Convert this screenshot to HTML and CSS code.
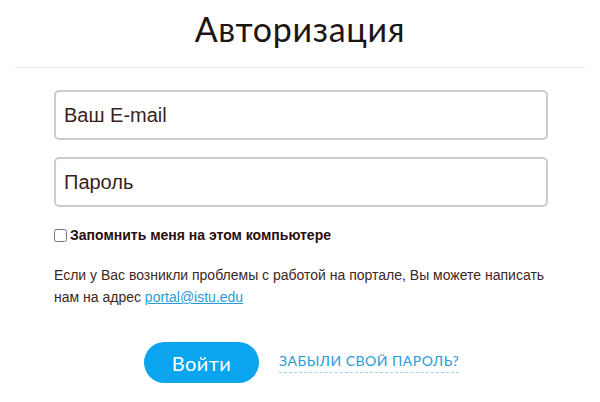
FILE: index.html
```html
<!doctype html>
<html lang="ru">
    <head>
        <meta charset="UTF-8" />
        <meta name="viewport" content="width=device-width, initial-scale=1.0" />
        <title>Авторизация</title>
        <link rel="stylesheet" href="styles.css">
    </head>
    <body>
        <div class="page-head">
            <h1>Авторизация</h1>
        </div>

        <form class="login-form">
            <input class="field" type="text" placeholder="Ваш E-mail" />
            <input class="field" type="password" placeholder="Пароль" />

            <label class="remember">
                <input type="checkbox" />
                <span>Запомнить меня на этом компьютере</span>
            </label>

            <p class="help">
                Если у Вас возникли проблемы с работой на портале, Вы можете написать
                нам на адрес <a href="#">portal@istu.edu</a>
            </p>

            <div class="actions">
                <button type="button" class="btn-login">Войти</button>
                <a href="#" class="forgot">ЗАБЫЛИ СВОЙ ПАРОЛЬ?</a>
            </div>
        </form>
    </body>
</html>
```

FILE: styles.css
```css
:root {
    --text-color: #3b1f1c;
    --accent-color: #0aa5ee;
    --link-color: #2a9bd6;
    --border-color: #cccccc;
}

body {
    font-family: "Liberation Sans", Arial, sans-serif;
    margin: 0;
    padding: 0;
    background: #fff;
    color: var(--text-color);
}

.page-head {
    margin: 0 14px 0 14px;
    height: 67px;
    border-bottom: 1px solid #ececec;
    display: flex;
    align-items: center;
    justify-content: center;
}

.page-head h1 {
    font-family: Lato, "Noto Sans", sans-serif;
    font-weight: 400;
    font-size: 34px;
    letter-spacing: 0.7px;
    color: #1e1414;
    margin: 0 0 10px 0;
}

.login-form {
    width: 494px;
    margin: 22px 0 0 54px;
}

.field {
    display: block;
    box-sizing: border-box;
    width: 100%;
    height: 50px;
    margin: 0 0 17px 0;
    padding: 0 8px;
    border: 2px solid var(--border-color);
    border-radius: 5px;
    font-family: "Liberation Sans", Arial, sans-serif;
    font-size: 20px;
    color: var(--text-color);
}

.field::placeholder {
    color: var(--text-color);
    opacity: 1;
}

.remember {
    display: flex;
    align-items: center;
    gap: 3px;
    margin-top: 20px;
    font-weight: bold;
    font-size: 14px;
    color: #2a0e0c;
}

.remember input {
    margin: 0;
    width: 13px;
    height: 13px;
}

.help {
    font-size: 14px;
    line-height: 22px;
    margin: 21px 0 0 0;
    color: #3d2724;
}

.help a {
    color: var(--link-color);
}

.actions {
    display: flex;
    align-items: center;
    gap: 20px;
    margin: 34px 0 0 90px;
}

.btn-login {
    width: 115px;
    height: 41px;
    border: none;
    border-radius: 21px;
    background: var(--accent-color);
    color: #fff;
    font-family: Lato, "Noto Sans", sans-serif;
    font-size: 20px;
    letter-spacing: 0.5px;
}

.forgot {
    font-family: Lato, "Noto Sans", sans-serif;
    font-size: 14px;
    letter-spacing: 0.5px;
    color: var(--link-color);
    text-decoration: none;
    padding-bottom: 3px;
    border-bottom: 1px dashed #9fd2ee;
}
```
